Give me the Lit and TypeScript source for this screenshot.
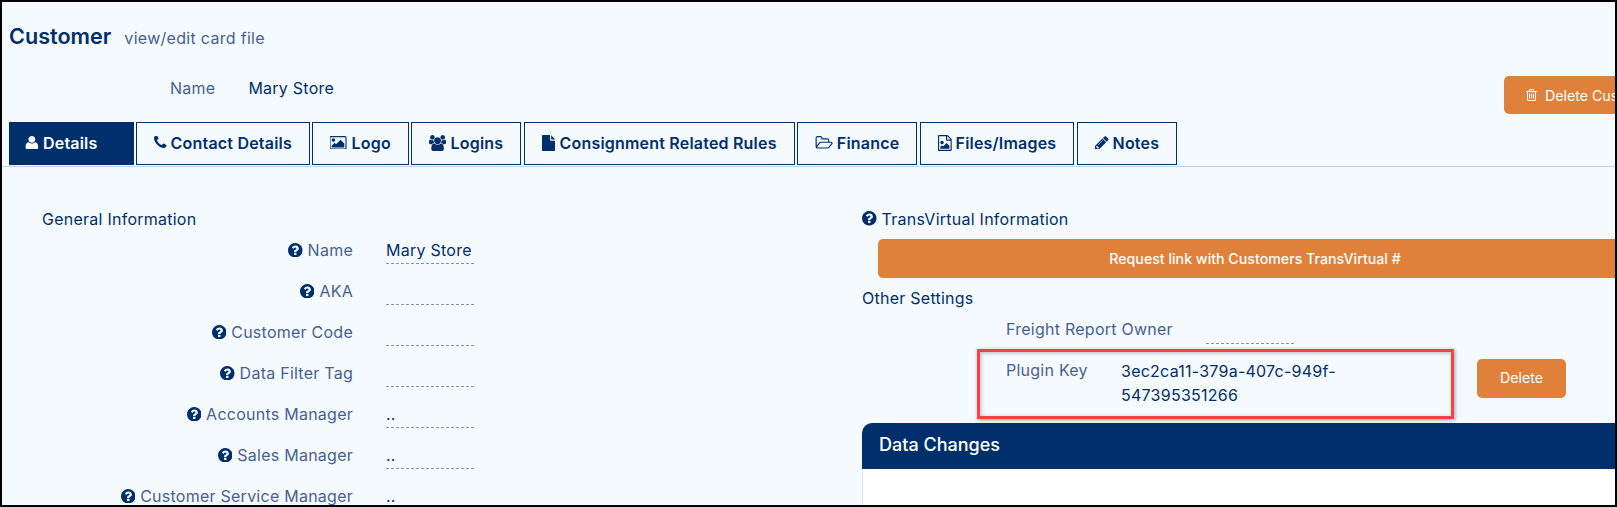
import { LitElement, html, css, svg } from "lit";
import { customElement } from "lit/decorators.js";

const ICONS: Record<string, [string, string]> = {
  help: ["128 128 1536 1536", "M1024 1376v-192q0-14-9-23t-23-9h-192q-14 0-23 9t-9 23v192q0 14 9 23t23 9h192q14 0 23-9t9-23zm256-672q0-88-55.5-163t-138.5-116-170-41q-243 0-371 213-15 24 8 42l132 100q7 6 19 6 16 0 25-12 53-68 86-92 34-24 86-24 48 0 85.5 26t37.5 59q0 38-20 61t-68 45q-63 28-115.5 86.5t-52.5 125.5v36q0 14 9 23t23 9h192q14 0 23-9t9-23q0-19 21.5-49.5t54.5-49.5q32-18 49-28.5t46-35 44.5-48 28-60.5 12.5-81zm384 192q0 209-103 385.5t-279.5 279.5-385.5 103-385.5-103-279.5-279.5-103-385.5 103-385.5 279.5-279.5 385.5-103 385.5 103 279.5 279.5 103 385.5z"],
  user: ["128 128 1536 1536", "M1600 1405q0 120-73 189.5t-194 69.5h-874q-121 0-194-69.5t-73-189.5q0-53 3.5-103.5t14-109 26.5-108.5 43-97.5 62-81 85.5-53.5 111.5-20q9 0 42 21.5t74.5 48 108 48 133.5 21.5 133.5-21.5 108-48 74.5-48 42-21.5q61 0 111.5 20t85.5 53.5 62 81 43 97.5 26.5 108.5 14 109 3.5 103.5zm-320-893q0 159-112.5 271.5t-271.5 112.5-271.5-112.5-112.5-271.5 112.5-271.5 271.5-112.5 271.5 112.5 112.5 271.5z"],
  phone: ["192 192 1408 1408", "M1600 1240q0 27-10 70.5t-21 68.5q-21 50-122 106-94 51-186 51-27 0-53-3.5t-57.5-12.5-47-14.5-55.5-20.5-49-18q-98-35-175-83-127-79-264-216t-216-264q-48-77-83-175-3-9-18-49t-20.5-55.5-14.5-47-12.5-57.5-3.5-53q0-92 51-186 56-101 106-122 25-11 68.5-21t70.5-10q14 0 21 3 18 6 53 76 11 19 30 54t35 63.5 31 53.5q3 4 17.5 25t21.5 35.5 7 28.5q0 20-28.5 50t-62 55-62 53-28.5 46q0 9 5 22.5t8.5 20.5 14 24 11.5 19q76 137 174 235t235 174q2 1 19 11.5t24 14 20.5 8.5 22.5 5q18 0 46-28.5t53-62 55-62 50-28.5q14 0 28.5 7t35.5 21.5 25 17.5q25 15 53.5 31t63.5 35 54 30q70 35 76 53 3 7 3 21z"],
  picture: ["0 128 1920 1536", "M576 576q0 80-56 136t-136 56-136-56-56-136 56-136 136-56 136 56 56 136zm1024 384v448h-1408v-192l320-320 160 160 512-512zm96-704h-1600q-13 0-22.5 9.5t-9.5 22.5v1216q0 13 9.5 22.5t22.5 9.5h1600q13 0 22.5-9.5t9.5-22.5v-1216q0-13-9.5-22.5t-22.5-9.5zm160 32v1216q0 66-47 113t-113 47h-1600q-66 0-113-47t-47-113v-1216q0-66 47-113t113-47h1600q66 0 113 47t47 113z"],
  users: ["0 0 1920 1792", "M593 896q-162 5-265 128h-134q-82 0-138-40.5t-56-118.5q0-353 124-353 6 0 43.5 21t97.5 42.5 119 21.5q67 0 133-23-5 37-5 66 0 139 81 256zm1071 637q0 120-73 189.5t-194 69.5h-874q-121 0-194-69.5t-73-189.5q0-53 3.5-103.5t14-109 26.5-108.5 43-97.5 62-81 85.5-53.5 111.5-20q10 0 43 21.5t73 48 107 48 135 21.5 135-21.5 107-48 73-48 43-21.5q61 0 111.5 20t85.5 53.5 62 81 43 97.5 26.5 108.5 14 109 3.5 103.5zm-1024-1277q0 106-75 181t-181 75-181-75-75-181 75-181 181-75 181 75 75 181zm704 384q0 159-112.5 271.5t-271.5 112.5-271.5-112.5-112.5-271.5 112.5-271.5 271.5-112.5 271.5 112.5 112.5 271.5zm576 225q0 78-56 118.5t-138 40.5h-134q-103-123-265-128 81-117 81-256 0-29-5-66 66 23 133 23 59 0 119-21.5t97.5-42.5 43.5-21q124 0 124 353zm-128-609q0 106-75 181t-181 75-181-75-75-181 75-181 181-75 181 75 75 181z"],
  file: ["0 0 1536 1792", "M1024 512v-472q22 14 36 28l408 408q14 14 28 36h-472zm-128 32q0 40 28 68t68 28h544v1056q0 40-28 68t-68 28h-1344q-40 0-68-28t-28-68v-1600q0-40 28-68t68-28h800v544z"],
  folder: ["0 128 1984 1536", "M1845 931q0-35-53-35h-1088q-40 0-85.5 21.5t-71.5 52.5l-294 363q-18 24-18 40 0 35 53 35h1088q40 0 86-22t71-53l294-363q18-22 18-39zm-1141-163h768v-160q0-40-28-68t-68-28h-576q-40 0-68-28t-28-68v-64q0-40-28-68t-68-28h-320q-40 0-68 28t-28 68v853l256-315q44-53 116-87.5t140-34.5zm1269 163q0 62-46 120l-295 363q-43 53-116 87.5t-140 34.5h-1088q-92 0-158-66t-66-158v-960q0-92 66-158t158-66h320q92 0 158 66t66 158v32h544q92 0 158 66t66 158v160h192q54 0 99 24.5t67 70.5q15 32 15 68z"],
  fileimg: ["0 0 1536 1792", "M1468 380q28 28 48 76t20 88v1152q0 40-28 68t-68 28h-1344q-40 0-68-28t-28-68v-1600q0-40 28-68t68-28h896q40 0 88 20t76 48zm-444-244v376h376q-10-29-22-41l-313-313q-12-12-41-22zm384 1528v-1024h-416q-40 0-68-28t-28-68v-416h-768v1536h1280zm-128-448v320h-1024v-192l192-192 128 128 384-384zm-832-192q-80 0-136-56t-56-136 56-136 136-56 136 56 56 136-56 136-136 56z"],
  pencil: ["128 128 1536 1536", "M491 1536l91-91-235-235-91 91v107h128v128h107zm523-928q0-22-22-22-10 0-17 7l-542 542q-7 7-7 17 0 22 22 22 10 0 17-7l542-542q7-7 7-17zm-54-192l416 416-832 832h-416v-416zm683 96q0 53-37 90l-166 166-416-416 166-165q36-38 90-38 53 0 91 38l235 234q37 39 37 91z"],
  trash: ["192 128 1408 1536", "M704 736v576q0 14-9 23t-23 9h-64q-14 0-23-9t-9-23v-576q0-14 9-23t23-9h64q14 0 23 9t9 23zm256 0v576q0 14-9 23t-23 9h-64q-14 0-23-9t-9-23v-576q0-14 9-23t23-9h64q14 0 23 9t9 23zm256 0v576q0 14-9 23t-23 9h-64q-14 0-23-9t-9-23v-576q0-14 9-23t23-9h64q14 0 23 9t9 23zm128 724v-948h-896v948q0 22 7 40.5t14.5 27 10.5 8.5h832q3 0 10.5-8.5t14.5-27 7-40.5zm-672-1076h448l-48-117q-7-9-17-11h-317q-10 2-17 11zm928 32v64q0 14-9 23t-23 9h-96v948q0 83-47 143.5t-113 60.5h-832q-66 0-113-58.5t-47-141.5v-952h-96q-14 0-23-9t-9-23v-64q0-14 9-23t23-9h309l70-167q15-37 54-63t79-26h320q40 0 79 26t54 63l70 167h309q14 0 23 9t9 23z"],
};

const icon = (name: string, cls = "ic") => {
  const [vb, d] = ICONS[name];
  const p = vb.split(" ").map(Number);
  return html`<svg class=${cls} viewBox=${vb} width=${p[2] / 112} height=${p[3] / 112} aria-hidden="true">${svg`<path fill="currentColor" d=${d}></path>`}</svg>`;
};

const TABS = [
  { label: "Details", icon: "user", active: true },
  { label: "Contact Details", icon: "phone" },
  { label: "Logo", icon: "picture" },
  { label: "Logins", icon: "users" },
  { label: "Consignment Related Rules", icon: "file" },
  { label: "Finance", icon: "folder" },
  { label: "Files/Images", icon: "fileimg" },
  { label: "Notes", icon: "pencil" },
];

const FIELDS = [
  ["Name", "Mary Store"],
  ["AKA", ""],
  ["Customer Code", ""],
  ["Data Filter Tag", ""],
  ["Accounts Manager", ".."],
  ["Sales Manager", ".."],
  ["Customer Service Manager", ".."],
];

@customElement("app-root")
export class AppRoot extends LitElement {
  static styles = css`
    :host {
      display: block;
      position: relative;
      box-sizing: border-box;
      width: 1617px;
      height: 507px;
      overflow: hidden;
      border: 2px solid #000;
      background: #f5faff;
      font-family: Inter, "Noto Sans", sans-serif;
      font-size: 16px;
      letter-spacing: 0.25px;
      color: #002f6c;
    }
    .title {
      display: flex;
      align-items: baseline;
      gap: 13px;
      height: 74px;
      padding: 21px 0 0 7px;
      box-sizing: border-box;
    }
    .title b { font-size: 21.6px; font-weight: 600; letter-spacing: 0; }
    .title span { color: #47618f; letter-spacing: 0.3px; }
    .head {
      display: flex;
      justify-content: space-between;
      height: 46px;
    }
    .name {
      display: flex;
      gap: 33px;
      padding: 3px 0 0 168px;
      line-height: 18px;
    }
    .name .k { color: #47618f; }
    .btn {
      flex: none;
      box-sizing: border-box;
      background: #df813b;
      color: #fff;
      border-radius: 5px;
      font-size: 14.2px;
      letter-spacing: 0;
      display: flex;
      align-items: center;
      justify-content: center;
      white-space: nowrap;
    }
    .del-cust {
      width: 150px;
      height: 38px;
      margin-right: -39px;
      justify-content: flex-start;
      padding-left: 22px;
      gap: 8px;
    }
    .del-cust .ic { flex: none; width: 11px; height: 12px; }
    .tabs {
      display: flex;
      gap: 2.5px;
      padding-left: 7.3px;
      height: 43.5px;
      border-bottom: 1px solid #c3d0de;
    }
    .tab {
      box-sizing: border-box;
      height: 43px;
      padding: 0 17px 2px;
      border: 1.5px solid #002f6c;
      display: flex;
      align-items: center;
      gap: 4px;
      font-weight: 600;
      letter-spacing: 0.2px;
      white-space: nowrap;
    }
    .tab .ic { flex: none; }
    .tab.active {
      background: #002f6c;
      color: #fff;
      padding-left: 15px;
      padding-right: 35px;
    }
    .cols {
      display: grid;
      grid-template-columns: 860px 1fr;
      padding-top: 43px;
    }
    .sec { line-height: 18px; }
    .left .sec { padding-left: 40px; }
    .rows {
      display: grid;
      grid-template-columns: 351px 88px;
      column-gap: 33px;
      grid-auto-rows: 41px;
      margin-top: 3px;
    }
    .lab {
      display: flex;
      justify-content: flex-end;
      align-items: center;
      gap: 5px;
      color: #47618f;
      height: 41px;
      padding-bottom: 2px;
      box-sizing: border-box;
      white-space: nowrap;
    }
    .help { width: 14.5px; height: 14.5px; color: #002f6c; flex: none; }
    .val {
      box-sizing: border-box;
      height: 33.5px;
      padding: 9px 0 0 0;
      line-height: 20px;
      border-bottom: 1px dashed #8a8f99;
      white-space: nowrap;
    }
    .right .sec { display: flex; align-items: center; gap: 5px; }
    .bar {
      width: 754px;
      height: 39px;
      margin: 11px 0 0 16px;
      border-radius: 5px;
      font-weight: 500;
    }
    .other { margin-top: 11px; }
    .set {
      display: grid;
      grid-template-columns: 194px 88px;
      column-gap: 6px;
      padding-left: 144px;
      margin-top: 13px;
      height: 31px;
      line-height: 18px;
    }
    .set .k { color: #47618f; white-space: nowrap; }
    .set .line { height: 23px; border-bottom: 1px dashed #8a8f99; }
    .plugin {
      display: flex;
      align-items: flex-start;
      padding-left: 144px;
      height: 60px;
      margin-top: 8px;
      line-height: 24px;
    }
    .plugin .k { color: #47618f; width: 115px; flex: none; margin-top: -1px; }
    .plugin .v { width: 240px; flex: none; white-space: nowrap; }
    .plugin .btn {
      width: 89px;
      height: 39px;
      margin: 0 0 0 116px;
    }
    .panel {
      width: 790px;
      margin-top: 4px;
      background: #fff;
      border: 1px solid #dde3ea;
      border-top: 0;
      border-radius: 10px 0 0 10px;
      height: 120px;
    }
    .panel h3 {
      margin: 0 0 0 -1px;
      height: 46px;
      padding-left: 17px;
      padding-bottom: 2px;
      box-sizing: border-box;
      display: flex;
      align-items: center;
      background: #002f6c;
      color: #fff;
      font-size: 18px;
      letter-spacing: 0;
      font-weight: 500;
      border-radius: 10px 0 0 0;
    }
    .mark {
      position: absolute;
      left: 975px;
      top: 347px;
      width: 477px;
      height: 70px;
      box-sizing: border-box;
      border: 3px solid #f5424a;
      box-shadow: 1px 1px 4px rgba(0, 0, 0, 0.35), inset 1px 1px 4px rgba(0, 0, 0, 0.25);
      pointer-events: none;
    }
  `;

  render() {
    return html`
      <div class="title"><b>Customer</b><span>view/edit card file</span></div>
      <div class="head">
        <div class="name"><span class="k">Name</span><span>Mary Store</span></div>
        <div class="btn del-cust">${icon("trash")}<span>Delete Customer</span></div>
      </div>
      <div class="tabs">
        ${TABS.map(
          (t) => html`<div class="tab ${t.active ? "active" : ""}">${icon(t.icon)}<span>${t.label}</span></div>`
        )}
      </div>
      <div class="cols">
        <div class="left">
          <div class="sec">General Information</div>
          <div class="rows">
            ${FIELDS.map(
              ([k, v]) => html`
                <div class="lab">${icon("help", "help")}<span>${k}</span></div>
                <div class="val">${v}</div>
              `
            )}
          </div>
        </div>
        <div class="right">
          <div class="sec">${icon("help", "help")}<span>TransVirtual Information</span></div>
          <div class="btn bar">Request link with Customers TransVirtual #</div>
          <div class="sec other">Other Settings</div>
          <div class="set"><span class="k">Freight Report Owner</span><span class="line"></span></div>
          <div class="plugin">
            <span class="k">Plugin Key</span>
            <span class="v">3ec2ca11-379a-407c-949f-<br />547395351266</span>
            <div class="btn">Delete</div>
          </div>
          <div class="panel"><h3>Data Changes</h3></div>
        </div>
      </div>
      <div class="mark"></div>
    `;
  }
}
